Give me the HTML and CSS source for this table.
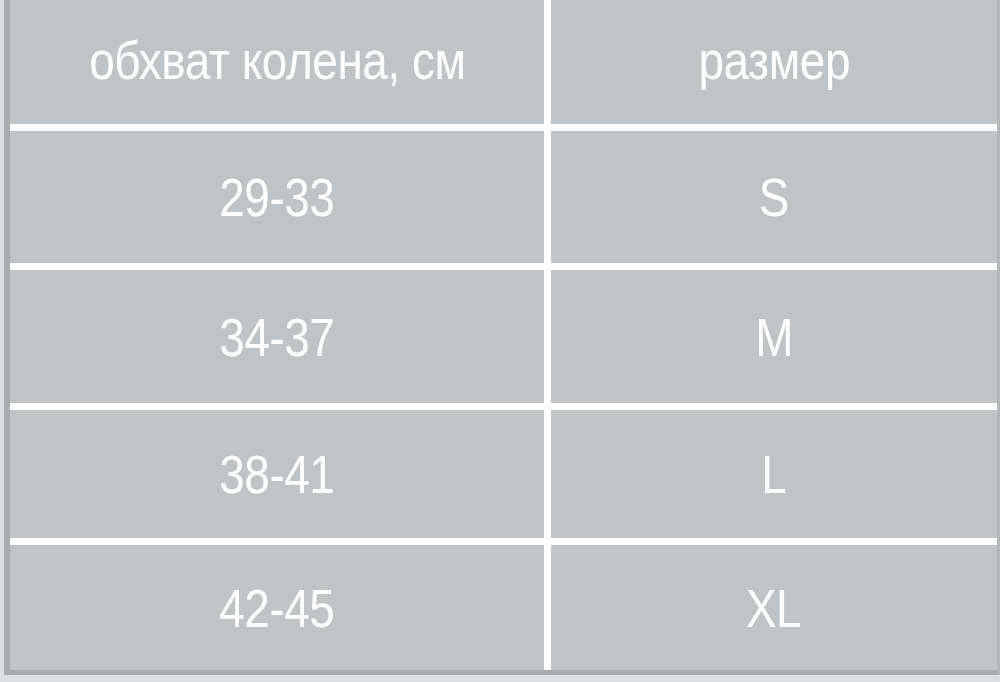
FILE: index.html
```html
<!DOCTYPE html>
<html lang="ru">
<head>
<meta charset="utf-8">
<title>Размеры</title>
<link rel="stylesheet" href="styles.css">
</head>
<body>
<div class="frame">
  <div class="table">
    <div class="cell head"><span class="txt">обхват колена, см</span></div>
    <div class="cell head"><span class="txt">размер</span></div>
    <div class="cell"><span class="txt">29-33</span></div>
    <div class="cell"><span class="txt">S</span></div>
    <div class="cell"><span class="txt">34-37</span></div>
    <div class="cell"><span class="txt">M</span></div>
    <div class="cell"><span class="txt">38-41</span></div>
    <div class="cell"><span class="txt">L</span></div>
    <div class="cell"><span class="txt">42-45</span></div>
    <div class="cell"><span class="txt">XL</span></div>
  </div>
</div>
</body>
</html>
```
FILE: styles.css
```css
html, body {
  margin: 0;
  padding: 0;
  background: #dcdedf;
}
.frame {
  width: 1000px;
  height: 682px;
  box-sizing: border-box;
  padding: 0 0 7px 4px;
  background: #dcdedf;
}
.table {
  display: grid;
  grid-template-columns: 534px 446px;
  grid-template-rows: 124px 132px 133px 128px 125px;
  gap: 7px;
  background: #ffffff;
  border-left: 6px solid #a9acae;
  border-bottom: 5px solid #a9acae;
  border-right: 3px solid #b4b7b9;
}
.cell {
  background: #c0c4c6;
  color: #ffffff;
  display: flex;
  align-items: center;
  justify-content: center;
  font-family: "Liberation Sans Narrow", "Arial Narrow", "Liberation Sans", sans-serif;
  font-size: 54px;
  line-height: 1;
  letter-spacing: -0.5px;
}
.txt {
  display: inline-block;
  transform: scaleX(0.85);
  white-space: nowrap;
}
.head {
  padding-bottom: 4px;
  box-sizing: border-box;
}
```
